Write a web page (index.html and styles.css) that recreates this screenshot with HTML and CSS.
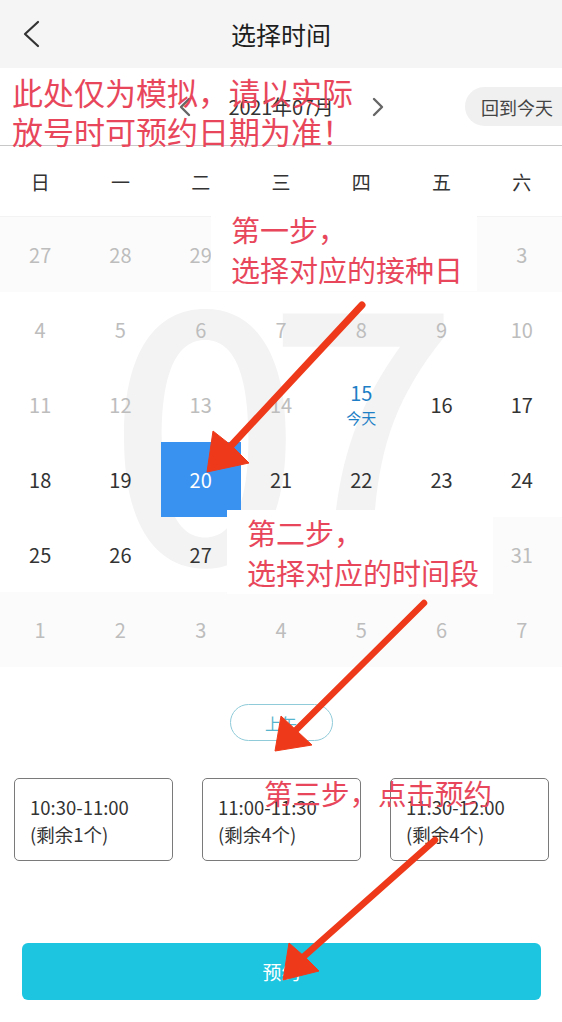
FILE: index.html
```html
<!DOCTYPE html>
<html lang="zh-CN">
<head>
<meta charset="utf-8">
<title>选择时间</title>
<link rel="stylesheet" href="styles.css">
</head>
<body>
<div class="page">
  <header class="topbar">
    <svg class="back" width="20" height="28" viewBox="0 0 20 28"><path d="M16 2 L3 14 L16 26" fill="none" stroke="#333" stroke-width="2.2" stroke-linecap="round" stroke-linejoin="round"/></svg>
    <h1 class="title">选择时间</h1>
  </header>

  <div class="monthbar">
    <div class="month-nav">
      <svg width="12" height="20" viewBox="0 0 12 20"><path d="M10 2 L2 10 L10 18" fill="none" stroke="#666" stroke-width="2.4" stroke-linecap="round" stroke-linejoin="round"/></svg>
      <span class="month-label">2021年07月</span>
      <svg width="12" height="20" viewBox="0 0 12 20"><path d="M2 2 L10 10 L2 18" fill="none" stroke="#666" stroke-width="2.4" stroke-linecap="round" stroke-linejoin="round"/></svg>
    </div>
    <div class="today-btn">回到今天</div>
  </div>

  <div class="weekdays">
    <div>日</div><div>一</div><div>二</div><div>三</div><div>四</div><div>五</div><div>六</div>
  </div>

  <div class="calendar">
    <div class="watermark" aria-hidden="true">07</div>
    <div class="grid">
      <div class="cell off">27</div><div class="cell off">28</div><div class="cell off">29</div><div class="cell off">30</div><div class="cell off">1</div><div class="cell off">2</div><div class="cell off">3</div>
      <div class="cell past">4</div><div class="cell past">5</div><div class="cell past">6</div><div class="cell past">7</div><div class="cell past">8</div><div class="cell past">9</div><div class="cell past">10</div>
      <div class="cell past">11</div><div class="cell past">12</div><div class="cell past">13</div><div class="cell past">14</div>
      <div class="cell today"><span class="num">15</span><span class="tag">今天</span></div>
      <div class="cell">16</div><div class="cell">17</div>
      <div class="cell">18</div><div class="cell">19</div><div class="cell selected">20</div><div class="cell">21</div><div class="cell">22</div><div class="cell">23</div><div class="cell">24</div>
      <div class="cell">25</div><div class="cell">26</div><div class="cell">27</div><div class="cell">28</div><div class="cell">29</div><div class="cell">30</div><div class="cell off">31</div>
      <div class="cell off">1</div><div class="cell off">2</div><div class="cell off">3</div><div class="cell off">4</div><div class="cell off">5</div><div class="cell off">6</div><div class="cell off">7</div>
    </div>
  </div>

  <div class="period"><span class="pill">上午</span></div>

  <div class="slots">
    <div class="slot"><div>10:30-11:00</div><div>(剩余1个)</div></div>
    <div class="slot"><div>11:00-11:30</div><div>(剩余4个)</div></div>
    <div class="slot"><div>11:30-12:00</div><div>(剩余4个)</div></div>
  </div>

  <div class="footer"><button class="book">预约</button></div>

  <div class="note note-top">此处仅为模拟，请以实际<br>放号时可预约日期为准！</div>
  <div class="note note-box note-1">第一步，<br>选择对应的接种日</div>
  <div class="note note-box note-2">第二步，<br>选择对应的时间段</div>
  <div class="note note-3">第三步，点击预约</div>

  <svg class="arrows" width="562" height="1022" viewBox="0 0 562 1022">
    <g fill="#ee3a1a" stroke="#ee3a1a">
      <line x1="362" y1="305" x2="228" y2="449" stroke-width="7" stroke-linecap="round"/>
      <polygon points="207,472 213,431 232,446 249,463" stroke-width="1"/>
      <line x1="424" y1="603" x2="293" y2="733" stroke-width="6.5" stroke-linecap="round"/>
      <polygon points="275,751 281,716 297,731 312,745" stroke-width="1"/>
      <line x1="435" y1="840" x2="301" y2="959" stroke-width="6.5" stroke-linecap="round"/>
      <polygon points="283,980 289,943 305,957 319,971" stroke-width="1"/>
    </g>
  </svg>
</div>
</body>
</html>
```

FILE: styles.css
```css
* { box-sizing: border-box; }
html, body { margin: 0; padding: 0; background: #fff; }
body {
  font-family: "Noto Sans CJK SC", "Noto Sans", sans-serif;
  color: #333;
}
.page {
  position: relative;
  width: 562px;
  height: 1022px;
  overflow: hidden;
  background: #fff;
}

/* top bar */
.topbar {
  height: 68px;
  background: #f5f5f5;
  display: flex;
  align-items: center;
  justify-content: center;
  position: relative;
}
.back { position: absolute; left: 22px; top: 20px; }
.title {
  margin: 0;
  font-size: 25px;
  font-weight: 400;
  color: #1e1e1e;
}

/* month bar */
.monthbar {
  height: 78px;
  border-bottom: 1px solid #c8c8c8;
  display: grid;
  grid-template-columns: 1fr auto 1fr;
  align-items: center;
}
.month-nav {
  grid-column: 2;
  display: flex;
  align-items: center;
  gap: 38px;
}
.month-label { font-size: 20px; color: #333; letter-spacing: -0.2px; }
.today-btn {
  grid-column: 3;
  justify-self: end;
  height: 39px;
  width: 97px;
  padding-left: 16px;
  display: flex;
  align-items: center;
  background: #f0f0f0;
  border-radius: 20px 0 0 20px;
  font-size: 18px;
  color: #444;
  white-space: nowrap;
}

/* weekdays */
.weekdays {
  height: 71px;
  display: grid;
  grid-template-columns: repeat(7, 1fr);
  align-items: center;
  text-align: center;
  font-size: 19px;
  color: #333;
  border-bottom: 1px solid #f3f3f3;
}

/* calendar */
.calendar {
  position: relative;
  height: 450px;
}
.watermark {
  position: absolute;
  left: 108px;
  top: 29px;
  font-size: 340px;
  line-height: 1;
  font-weight: 500;
  color: #f3f3f3;
  letter-spacing: -36px;
  white-space: nowrap;
}
.grid {
  position: relative;
  display: grid;
  grid-template-columns: repeat(7, 1fr);
  grid-auto-rows: 75px;
}
.cell {
  display: flex;
  flex-direction: column;
  align-items: center;
  justify-content: center;
  font-size: 20px;
  color: #333;
}
.cell.past { color: #bdbdbd; }
.cell.off { color: #bdbdbd; background: #fbfbfb; }
.cell.today { color: #1f7fc6; }
.cell.today .num { line-height: 26px; }
.cell.today .tag { font-size: 15px; line-height: 24px; }
.cell.selected { background: #3a92f0; color: #fff; }

/* period */
.period {
  padding-top: 37px;
  display: flex;
  justify-content: center;
}
.pill {
  width: 103px;
  height: 37px;
  border: 1px solid #8fcbd9;
  border-radius: 19px;
  display: flex;
  align-items: center;
  justify-content: center;
  font-size: 16px;
  color: #56b4cd;
}

/* slots */
.slots {
  margin-top: 37px;
  padding: 0 13px 0 14px;
  display: flex;
  gap: 29px;
}
.slot {
  width: 159px;
  height: 83px;
  border: 1.5px solid #7a7a7a;
  border-radius: 5px;
  padding: 15px 0 0 15px;
  font-size: 18.5px;
  line-height: 27px;
  color: #333;
  white-space: nowrap;
}

/* footer */
.footer {
  margin-top: 82px;
  padding: 0 21px 0 22px;
}
.book {
  display: block;
  width: 100%;
  height: 57px;
  border: none;
  border-radius: 6px;
  background: #1dc5e0;
  color: #fff;
  font-family: inherit;
  font-size: 19px;
}

/* annotations */
.note {
  position: absolute;
  color: #e8475b;
  font-size: 29px;
  line-height: 40px;
  white-space: nowrap;
}
.note-top { left: 12px; top: 72px; font-size: 31px; line-height: 39px; }
.note-box { background: #fff; padding: 2px 14px 2px 20px; }
.note-1 { left: 211px; top: 207px; }
.note-2 { left: 227px; top: 510px; }
.note-3 { left: 264px; top: 773px; font-size: 28.5px; }

.arrows {
  position: absolute;
  left: 0;
  top: 0;
  pointer-events: none;
}
```
